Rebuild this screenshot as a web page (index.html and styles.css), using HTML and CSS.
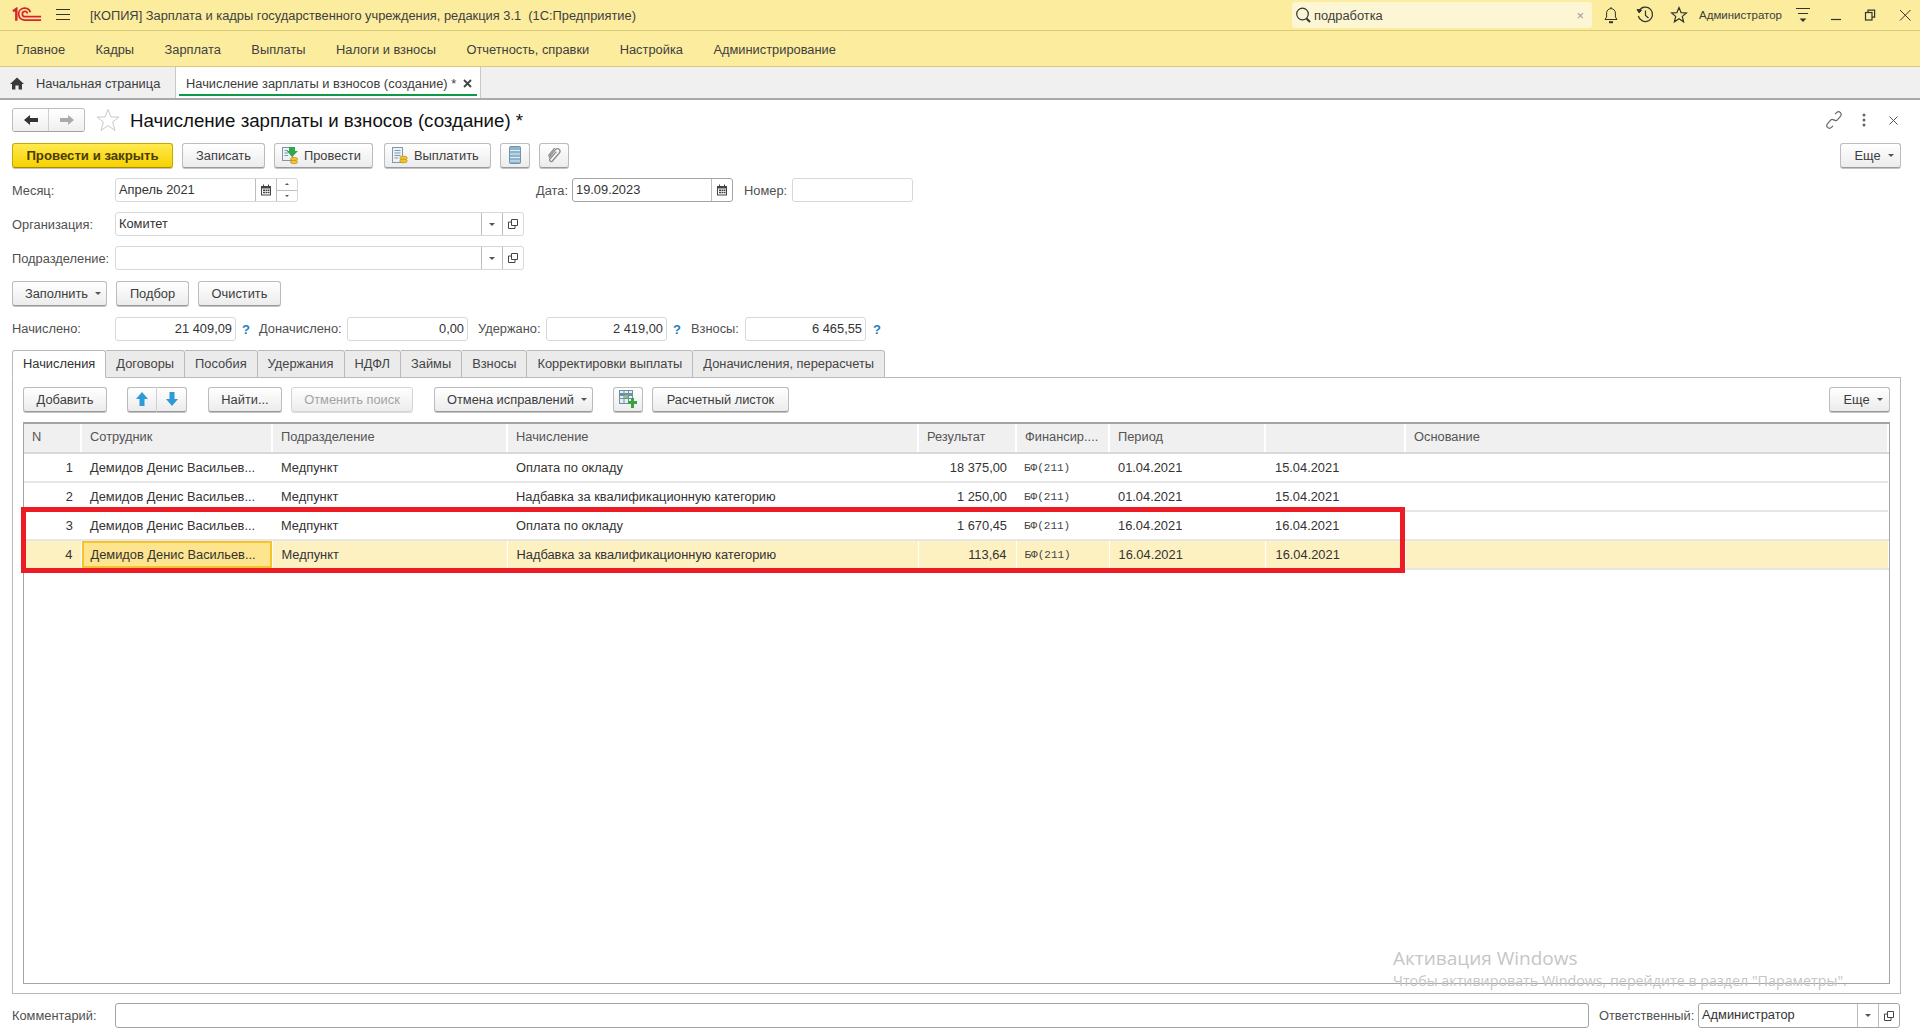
FILE: index.html
```html
<!DOCTYPE html>
<html lang="ru">
<head>
  <meta charset="UTF-8">
  <title>Начисление зарплаты и взносов (создание)</title>
  <link rel="stylesheet" href="styles.css">
</head>
<body>
  <header class="topbar">
    <svg class="logo" width="30" height="16" viewBox="0 0 32 16" fill="none" stroke="#d8232a">
      <path d="M1 4 L4.6 1.6 V14" stroke-width="2.6"/>
      <path d="M19.6 5 A6.4 6.4 0 1 0 14 13.4 H31" stroke-width="1.9"/>
      <path d="M16.6 6.4 A2.8 2.8 0 1 0 14 9.8 H31" stroke-width="1.9"/>
    </svg>
    <svg class="burger" width="16" height="12" viewBox="0 0 16 12" stroke="#333"><path d="M1 .5H15M1 5.5H15M1 10.5H15"/></svg>
    <div class="app-title">[КОПИЯ] Зарплата и кадры государственного учреждения, редакция 3.1&nbsp; (1С:Предприятие)</div>
    <div class="search">
      <svg width="16" height="18" viewBox="0 0 16 18" fill="none" stroke="#333"><circle cx="7.5" cy="8" r="5.8" stroke-width="1.2"/><path d="M11.5 12.5L15 16" stroke-width="2"/></svg>
      <span class="search-text">подработка</span>
      <span class="search-clear">×</span>
    </div>
    <svg class="top-icon" width="18" height="20" viewBox="0 0 18 20" fill="none" stroke="#333"><path d="M3 14.5H15L13.4 12V8A4.4 4.4 0 0 0 4.6 8V12Z"/><path d="M7 17.2H11" stroke-width="2"/><path d="M9 2V3.5"/></svg>
    <svg class="top-icon" width="18" height="20" viewBox="0 0 18 20" fill="none" stroke="#333"><path d="M3.2 5.5A7.2 7.2 0 1 1 2.3 11" stroke-width="1.2"/><path d="M1 4.5L3.2 8L5.6 5Z" fill="#333"/><path d="M9.5 5.5V10.5L12.5 13" stroke-width="1.2"/></svg>
    <svg class="top-icon" width="18" height="20" viewBox="0 0 18 20" fill="none" stroke="#333" stroke-width="1.2"><path d="M9 2.5L11.1 7.6L16.4 8L12.3 11.4L13.6 16.8L9 13.8L4.4 16.8L5.7 11.4L1.6 8L6.9 7.6Z"/></svg>
    <span class="user-name">Администратор</span>
    <svg class="user-menu" width="16" height="16" viewBox="0 0 16 16" stroke="#333"><path d="M1 1.5H15M3 6.5H13"/><path d="M4.6 11.5H11.4L8 15Z" fill="#333" stroke="none"/></svg>
    <svg class="win-btn win-min" width="12" height="12" viewBox="0 0 12 12" stroke="#333"><path d="M1 10.5H11" stroke-width="1.2"/></svg>
    <svg class="win-btn" width="12" height="12" viewBox="0 0 12 12" fill="none" stroke="#333" stroke-width="1.2"><rect x="1.5" y="3.5" width="6.5" height="7.5"/><path d="M4 3.5V1.2H10.6V8.2H8"/></svg>
    <svg class="win-btn" width="14" height="14" viewBox="0 0 14 14" stroke="#333"><path d="M2 2L12.5 12.5M12.5 2L2 12.5"/></svg>
  </header>

  <nav class="menubar">
    <a href="#">Главное</a>
    <a href="#">Кадры</a>
    <a href="#">Зарплата</a>
    <a href="#">Выплаты</a>
    <a href="#">Налоги и взносы</a>
    <a href="#">Отчетность, справки</a>
    <a href="#">Настройка</a>
    <a href="#">Администрирование</a>
  </nav>

  <div class="tabbar">
    <div class="page-tab home-tab">
      <svg width="14" height="13" viewBox="0 0 14 13" fill="#3a3a3a"><path d="M7 .5L14 7H12V12.5H8.6V8.6H5.4V12.5H2V7H0Z"/></svg>
      <span>Начальная страница</span>
    </div>
    <div class="page-tab doc-tab">
      <span>Начисление зарплаты и взносов (создание) *</span>
      <svg width="9" height="9" viewBox="0 0 9 9" stroke="#444" stroke-width="1.8"><path d="M1 1L8 8M8 1L1 8"/></svg>
    </div>
  </div>

  <main class="form">
    <div class="form-head">
      <div class="nav-group">
        <button class="nav-btn"><svg width="14" height="10" viewBox="0 0 14 10" fill="#333"><path d="M0 5L6 0V3H14V7H6V10Z"/></svg></button>
        <button class="nav-btn"><svg width="14" height="10" viewBox="0 0 14 10" fill="#aaa"><path d="M14 5L8 0V3H0V7H8V10Z"/></svg></button>
      </div>
      <svg class="fav-star" width="24" height="24" viewBox="0 0 24 24" fill="#fff" stroke="#c9c9c9"><path d="M12 1.5L15 9H23L16.6 14L19 22.5L12 17.5L5 22.5L7.4 14L1 9H9Z"/></svg>
      <h1 class="form-title">Начисление зарплаты и взносов (создание) *</h1>
      <div class="head-tools">
        <svg width="16" height="18" viewBox="0 0 16 18" fill="none" stroke="#666" stroke-width="1.2"><path d="M9 3.2L10.6 1.6A2.6 2.6 0 0 1 14.4 5.4L11.6 8.6A2.6 2.6 0 0 1 8 8.8"/><path d="M7 14.8L5.4 16.4A2.6 2.6 0 0 1 1.6 12.6L4.4 9.4A2.6 2.6 0 0 1 8 9.2"/></svg>
        <svg width="4" height="14" viewBox="0 0 4 14" fill="#666"><circle cx="2" cy="2" r="1.5"/><circle cx="2" cy="7" r="1.5"/><circle cx="2" cy="12" r="1.5"/></svg>
        <svg class="head-close" width="9" height="9" viewBox="0 0 9 9" stroke="#555"><path d="M.5 .5L8.5 8.5M8.5 .5L.5 8.5"/></svg>
      </div>
    </div>

    <div class="toolbar">
      <button class="btn btn-primary w-161">Провести и закрыть</button>
      <button class="btn w-83">Записать</button>
      <button class="btn w-99 btn-icon">
        <svg width="18" height="19" viewBox="0 0 18 19"><rect x="1.5" y="1.5" width="10" height="13" fill="#eef2f6" stroke="#7f97ad"/><path d="M3.5 4.5H7M3.5 7H7M3.5 9.5H7" stroke="#7f97ad"/><path d="M8 1H14V5H17L11 11L5.8 5H8Z" fill="#33a650"/><ellipse cx="13" cy="13" rx="3.6" ry="1.8" fill="#f2c230" stroke="#b58a10" stroke-width=".6"/><ellipse cx="13" cy="16" rx="3.6" ry="1.8" fill="#f2c230" stroke="#b58a10" stroke-width=".6"/></svg>
        Провести
      </button>
      <button class="btn w-107 btn-icon btn-pay">
        <svg width="18" height="19" viewBox="0 0 18 19"><rect x="1.5" y="1.5" width="10" height="15" fill="#eef2f6" stroke="#7f97ad"/><path d="M3.5 4.5H9.5M3.5 7H9.5M3.5 9.5H9.5M3.5 12H7" stroke="#7f97ad"/><ellipse cx="12.5" cy="12" rx="3.8" ry="1.9" fill="#f2c230" stroke="#b58a10" stroke-width=".6"/><ellipse cx="12.5" cy="15" rx="3.8" ry="1.9" fill="#f2c230" stroke="#b58a10" stroke-width=".6"/></svg>
        Выплатить
      </button>
      <button class="btn w-30">
        <svg width="12" height="18" viewBox="0 0 12 18"><rect x=".5" y=".5" width="11" height="17" rx="1" fill="#8eb3cd" stroke="#6d93ae"/><path d="M1 4.5H11M1 8H11M1 11.5H11M1 15H11" stroke="#e2ecf3"/></svg>
      </button>
      <button class="btn w-30">
        <svg width="16" height="18" viewBox="0 0 16 18" fill="none" stroke="#8a8a8a" stroke-width="1.3"><path d="M3 11.5L9.6 3.4A2.6 2.6 0 0 1 13.5 6.8L6.4 15A1.6 1.6 0 0 1 4 12.8L10.4 5.6"/><path d="M2.4 10L8.6 2.2"/></svg>
      </button>
      <button class="btn btn-drop btn-more w-61">Еще <i class="caret"></i></button>
    </div>

    <div class="field-row">
      <label class="lbl lbl-main">Месяц:</label>
      <div class="input w-183">
        <span class="input-value">Апрель 2021</span>
        <span class="input-cell"><svg width="12" height="12" viewBox="0 0 12 12" fill="#444"><path d="M1 2H3V.5H4V2H8V.5H9V2H11V11.5H1ZM2 4.5V10.5H10V4.5Z"/><path d="M3 5.5H5V7H3ZM5.5 5.5H7.5V7H5.5ZM8 5.5H9.5V7H8ZM3 7.8H5V9.3H3ZM5.5 7.8H7.5V9.3H5.5ZM8 7.8H9.5V9.3H8Z"/></svg></span>
        <span class="input-cell spin"><span class="spin-part"><i class="caret caret-up"></i></span><span class="spin-part"><i class="caret"></i></span></span>
      </div>
      <label class="lbl lbl-date">Дата:</label>
      <div class="input input-dark w-161">
        <span class="input-value">19.09.2023</span>
        <span class="input-cell"><svg width="12" height="12" viewBox="0 0 12 12" fill="#444"><path d="M1 2H3V.5H4V2H8V.5H9V2H11V11.5H1ZM2 4.5V10.5H10V4.5Z"/><path d="M3 5.5H5V7H3ZM5.5 5.5H7.5V7H5.5ZM8 5.5H9.5V7H8ZM3 7.8H5V9.3H3ZM5.5 7.8H7.5V9.3H5.5ZM8 7.8H9.5V9.3H8Z"/></svg></span>
      </div>
      <label class="lbl lbl-num">Номер:</label>
      <div class="input w-121"></div>
    </div>

    <div class="field-row">
      <label class="lbl lbl-main">Организация:</label>
      <div class="input w-409">
        <span class="input-value">Комитет</span>
        <span class="input-cell"><i class="caret"></i></span>
        <span class="input-cell"><svg width="12" height="12" viewBox="0 0 12 12" fill="none" stroke="#444"><path d="M4.5 1.5H10.5V7.5H4.5Z"/><path d="M4 4H1.5V10.5H8V8"/></svg></span>
      </div>
    </div>

    <div class="field-row">
      <label class="lbl lbl-main">Подразделение:</label>
      <div class="input w-409">
        <span class="input-value"></span>
        <span class="input-cell"><i class="caret"></i></span>
        <span class="input-cell"><svg width="12" height="12" viewBox="0 0 12 12" fill="none" stroke="#444"><path d="M4.5 1.5H10.5V7.5H4.5Z"/><path d="M4 4H1.5V10.5H8V8"/></svg></span>
      </div>
    </div>

    <div class="fill-row">
      <button class="btn btn-drop w-95">Заполнить <i class="caret"></i></button>
      <button class="btn w-73">Подбор</button>
      <button class="btn w-83">Очистить</button>
    </div>

    <div class="totals-row">
      <label class="lbl lbl-main">Начислено:</label>
      <div class="input amount w-121">21 409,09</div>
      <span class="hint hint-a">?</span>
      <label class="lbl lbl-don">Доначислено:</label>
      <div class="input amount w-121">0,00</div>
      <label class="lbl lbl-ud">Удержано:</label>
      <div class="input amount w-121">2 419,00</div>
      <span class="hint hint-b">?</span>
      <label class="lbl lbl-vz">Взносы:</label>
      <div class="input amount w-121">6 465,55</div>
      <span class="hint hint-c">?</span>
    </div>

    <div class="tabs">
      <div class="tab tab-active">Начисления</div>
      <div class="tab">Договоры</div>
      <div class="tab">Пособия</div>
      <div class="tab">Удержания</div>
      <div class="tab">НДФЛ</div>
      <div class="tab">Займы</div>
      <div class="tab">Взносы</div>
      <div class="tab">Корректировки выплаты</div>
      <div class="tab">Доначисления, перерасчеты</div>
    </div>

    <section class="panel">
      <div class="panel-tools">
        <button class="btn w-84">Добавить</button>
        <div class="btn-pair">
          <button class="btn w-30"><svg width="12" height="14" viewBox="0 0 12 14" fill="#2e9ad6"><path d="M6 0L12 7H8.5V14H3.5V7H0Z"/></svg></button>
          <button class="btn w-30"><svg width="12" height="14" viewBox="0 0 12 14" fill="#2e9ad6"><path d="M6 14L12 7H8.5V0H3.5V7H0Z"/></svg></button>
        </div>
        <button class="btn w-74 gap-21">Найти...</button>
        <button class="btn btn-off w-122">Отменить поиск</button>
        <button class="btn btn-drop w-159 gap-21">Отмена исправлений <i class="caret"></i></button>
        <button class="btn w-30 gap-20">
          <svg width="18" height="18" viewBox="0 0 18 18"><rect x=".5" y=".5" width="13" height="13" fill="#e6eef3" stroke="#6f8fa5"/><path d="M.5 4.5H13.5" stroke="#6f8fa5" stroke-width="3"/><path d="M5 1V13M9.5 1V13M1 8.5H13" stroke="#6f8fa5"/><path d="M5.5 5H9V8H5.5Z" fill="#8ec06c"/><path d="M12 8H15V11H18V14H15V18H12V14H9V11H12Z" fill="#38a33f"/></svg>
        </button>
        <button class="btn w-137">Расчетный листок</button>
        <button class="btn btn-drop btn-more w-61">Еще <i class="caret"></i></button>
      </div>

      <div class="grid-wrap">
        <table class="grid">
          <colgroup>
            <col class="c-n"><col class="c-emp"><col class="c-dep"><col class="c-acc"><col class="c-res"><col class="c-fin"><col class="c-per"><col class="c-end"><col>
          </colgroup>
          <thead>
            <tr><th>N</th><th>Сотрудник</th><th>Подразделение</th><th>Начисление</th><th>Результат</th><th>Финансир....</th><th>Период</th><th></th><th>Основание</th></tr>
          </thead>
          <tbody>
            <tr><td class="num">1</td><td>Демидов Денис Васильев...</td><td>Медпункт</td><td>Оплата по окладу</td><td class="sum">18 375,00</td><td class="fin">БФ(211)</td><td>01.04.2021</td><td class="date-to">15.04.2021</td><td></td></tr>
            <tr><td class="num">2</td><td>Демидов Денис Васильев...</td><td>Медпункт</td><td>Надбавка за квалификационную категорию</td><td class="sum">1 250,00</td><td class="fin">БФ(211)</td><td>01.04.2021</td><td class="date-to">15.04.2021</td><td></td></tr>
            <tr><td class="num">3</td><td>Демидов Денис Васильев...</td><td>Медпункт</td><td>Оплата по окладу</td><td class="sum">1 670,45</td><td class="fin">БФ(211)</td><td>16.04.2021</td><td class="date-to">16.04.2021</td><td></td></tr>
            <tr class="row-current"><td class="num">4</td><td class="cell-current">Демидов Денис Васильев...</td><td>Медпункт</td><td>Надбавка за квалификационную категорию</td><td class="sum">113,64</td><td class="fin">БФ(211)</td><td>16.04.2021</td><td class="date-to">16.04.2021</td><td></td></tr>
          </tbody>
        </table>
        <div class="red-frame"></div>
      </div>
    </section>

    <div class="bottom-row">
      <label class="lbl lbl-main">Комментарий:</label>
      <div class="input input-dark w-1474"></div>
      <label class="lbl lbl-resp">Ответственный:</label>
      <div class="input input-dark w-202">
        <span class="input-value">Администратор</span>
        <span class="input-cell"><i class="caret"></i></span>
        <span class="input-cell"><svg width="12" height="12" viewBox="0 0 12 12" fill="none" stroke="#444"><path d="M4.5 1.5H10.5V7.5H4.5Z"/><path d="M4 4H1.5V10.5H8V8"/></svg></span>
      </div>
    </div>
  </main>

  <div class="activation">
    <div class="activation-title">Активация Windows</div>
    <div class="activation-text">Чтобы активировать Windows, перейдите в раздел "Параметры".</div>
  </div>
</body>
</html>
```

FILE: styles.css
```css
* {
  box-sizing: border-box;
}

html, body {
  margin: 0;
  height: 1036px;
  overflow: hidden;
}

body {
  font-family: "Liberation Sans", Arial, sans-serif;
  font-size: 12.85px;
  color: #3c3c3c;
  background-color: #fff;
  position: relative;
}

/* top title bar */
.topbar {
  height: 31px;
  background-color: #fbec9e;
  border-bottom: 1px solid #d9c97a;
  display: flex;
  align-items: center;
  padding-right: 8px;
}

.logo {
  margin-left: 12px;
}

.burger {
  margin-left: 13px;
}

.app-title {
  margin-left: 19px;
  flex: 1;
  color: #3f3f3f;
}

.search {
  width: 300px;
  height: 26px;
  background-color: #fdf6d4;
  border-radius: 3px;
  display: flex;
  align-items: center;
  padding: 0 8px 0 3px;
  margin-right: 10px;
}

.search-text {
  flex: 1;
  margin-left: 3px;
}

.search-clear {
  color: #999;
  font-size: 13px;
}

.top-icon {
  margin-left: 16px;
}

.search + .top-icon {
  margin-left: 0;
}

.user-name {
  font-size: 11.5px;
  margin-left: 11px;
  width: 83px;
}

.user-menu {
  margin-left: 13px;
}

.win-btn {
  margin-left: 22px;
}

.win-min {
  margin-left: 19px;
}

/* section menu */
.menubar {
  height: 36px;
  background-color: #fbec9e;
  border-bottom: 1px solid #d9c97a;
  display: flex;
  align-items: center;
  padding: 1px 0 0 16px;
  gap: 30.5px;
}

.menubar a {
  color: #3f3f3f;
  text-decoration: none;
}

/* open pages */
.tabbar {
  height: 33px;
  background-color: #f0f0f0;
  border-bottom: 2px solid #a9a9a9;
  display: flex;
}

.page-tab {
  height: 31px;
  display: flex;
  align-items: center;
  border-right: 1px solid #c9c9c9;
  padding-top: 1px;
}

.home-tab {
  width: 176px;
  padding-left: 10px;
  gap: 12px;
}

.doc-tab {
  width: 305px;
  background-color: #fff;
  padding: 1px 8px 0 10px;
  justify-content: space-between;
  position: relative;
}

.doc-tab::after {
  content: "";
  position: absolute;
  left: 3px;
  right: 3px;
  bottom: 2px;
  height: 2px;
  background-color: #0b9a4a;
}

/* form */
.form {
  padding: 8px 19px 0 12px;
}

.form-head {
  display: flex;
  align-items: center;
  height: 24px;
}

.nav-group {
  display: flex;
  width: 73px;
  height: 24px;
  border: 1px solid #bdbdbd;
  border-bottom-color: #a0a0a0;
  border-radius: 3px;
  overflow: hidden;
}

.nav-btn {
  flex: 1;
  border: 0;
  padding: 0;
  background: linear-gradient(#fff, #efefef);
  display: flex;
  align-items: center;
  justify-content: center;
}

.nav-btn + .nav-btn {
  border-left: 1px solid #cfcfcf;
}

.fav-star {
  margin-left: 11px;
}

.form-title {
  margin: 1px 0 0 10px;
  font-size: 18.7px;
  font-weight: normal;
  color: #111;
  flex: 1;
}

.head-tools {
  display: flex;
  align-items: center;
  gap: 20px;
  margin-right: 3px;
}

.head-close {
  margin-left: 3px;
}

.toolbar {
  display: flex;
  align-items: center;
  gap: 9px;
  height: 26px;
  margin-top: 10px;
}

.btn {
  height: 25px;
  padding: 0;
  font-family: inherit;
  font-size: 12.85px;
  color: #3c3c3c;
  background: linear-gradient(#fff, #ececec);
  border: 1px solid #bcbcbc;
  border-bottom-color: #9a9a9a;
  border-radius: 3px;
  box-shadow: 0 1px 0 #c4c4c4;
  display: inline-flex;
  align-items: center;
  justify-content: center;
  gap: 7px;
}

.btn-primary {
  background: linear-gradient(#ffe94f, #f6d200);
  border-color: #c7a800;
  border-bottom-color: #a68c00;
  color: #4a3c00;
  font-weight: bold;
  font-size: 13.2px;
}

.btn-off {
  color: #a3a3a3;
  border-color: #d4d4d4;
  box-shadow: 0 1px 0 #dcdcdc;
}

.btn-more {
  margin-left: auto;
}

.btn-icon {
  justify-content: flex-start;
  padding-left: 6px;
  gap: 5px;
}

.btn-pay {
  margin-left: 2px;
}

.btn-drop {
  padding-left: 7px;
}

.caret {
  display: inline-block;
  width: 0;
  height: 0;
  border-left: 3px solid transparent;
  border-right: 3px solid transparent;
  border-top: 3px solid #555;
}

.caret-up {
  border-top: 0;
  border-bottom: 3px solid #555;
}

.w-30 { width: 30px; }
.w-61 { width: 61px; }
.w-73 { width: 73px; }
.w-74 { width: 74px; }
.w-83 { width: 83px; }
.w-84 { width: 84px; }
.w-95 { width: 95px; }
.w-99 { width: 99px; }
.w-107 { width: 107px; }
.w-121 { width: 121px; }
.w-122 { width: 122px; }
.w-137 { width: 137px; }
.w-159 { width: 159px; }
.w-161 { width: 161px; }
.w-183 { width: 183px; }
.w-202 { width: 202px; }
.w-409 { width: 409px; }
.w-1474 { width: 1474px; }

.field-row, .totals-row, .bottom-row {
  display: flex;
  align-items: center;
  height: 24px;
  margin-top: 10px;
}

.lbl {
  color: #505050;
  white-space: nowrap;
}

.lbl-main { width: 103px; }
.lbl-date { margin-left: 233px; width: 37px; text-align: right; margin-right: 4px; }
.lbl-num { margin-left: 11px; width: 48px; }
.lbl-don { margin-left: 8px; width: 88px; }
.lbl-ud { margin-left: 10px; width: 68px; }
.lbl-vz { margin-left: 8px; width: 54px; }
.lbl-resp { margin-left: 10px; width: 99px; }

.input {
  height: 24px;
  background-color: #fff;
  border: 1px solid #d8d8d8;
  border-radius: 3px;
  display: flex;
  align-items: stretch;
}

.input-dark {
  border-color: #a4a4a4;
}

.input-value {
  flex: 1;
  padding-left: 3px;
  line-height: 22px;
  color: #333;
}

.input-cell {
  width: 21px;
  border-left: 1px solid #bdbdbd;
  display: flex;
  align-items: center;
  justify-content: center;
}

.spin {
  flex-direction: column;
}

.spin-part {
  flex: 1;
  width: 100%;
  display: flex;
  align-items: center;
  justify-content: center;
}

.spin-part + .spin-part {
  border-top: 1px solid #bdbdbd;
}

.spin .caret {
  border-left-width: 2px;
  border-right-width: 2px;
  border-top-width: 2px;
}

.spin .caret-up {
  border-top-width: 0;
  border-bottom-width: 2px;
}

.amount {
  justify-content: flex-end;
  align-items: center;
  padding: 0 3px 1px 0;
  color: #333;
}

.hint {
  color: #1d7fc0;
  font-weight: bold;
  font-size: 13px;
}

.hint-a { margin-left: 6px; width: 9px; }
.hint-b { margin-left: 6px; width: 10px; }
.hint-c { margin-left: 7px; }

.fill-row {
  display: flex;
  gap: 9px;
  height: 26px;
  margin-top: 11px;
}

.totals-row {
  margin-top: 10px;
}

.totals-row .lbl {
  padding-bottom: 1px;
}

/* tabs */
.tabs {
  display: flex;
  height: 28px;
  margin-top: 9px;
  margin-bottom: -1px;
  position: relative;
}

.tab {
  height: 28px;
  padding: 0 10px 2px;
  display: flex;
  align-items: center;
  background-color: #ebebeb;
  border: 1px solid #b9b9b9;
  border-left: 0;
  border-radius: 0 3px 0 0;
  color: #444;
}

.tab-active {
  background-color: #fff;
  border-left: 1px solid #b9b9b9;
  border-bottom-color: #fff;
  border-radius: 3px 3px 0 0;
  color: #333;
}

.panel {
  height: 617px;
  border: 1px solid #b9b9b9;
  padding: 8px 10px 10px 10px;
}

.panel-tools {
  display: flex;
  align-items: center;
  height: 26px;
  gap: 9px;
}

.panel-tools > .btn-pair {
  margin-left: 11px;
}

.btn-pair {
  display: flex;
}

.btn-pair .btn {
  border-radius: 0 3px 3px 0;
  border-left: 0;
}

.btn-pair .btn:first-child {
  border-left: 1px solid #bcbcbc;
  border-right: 1px solid #cfcfcf;
  border-radius: 3px 0 0 3px;
}

.gap-21 { margin-left: 12px; }
.gap-20 { margin-left: 11px; }

.grid-wrap {
  position: relative;
  height: 562px;
  margin-top: 10px;
  border: 1px solid #a4a4a4;
  border-top-width: 2px;
}

.grid {
  width: 100%;
  border-collapse: collapse;
  table-layout: fixed;
}

.c-n { width: 57px; }
.c-emp { width: 191px; }
.c-dep { width: 235px; }
.c-acc { width: 411px; }
.c-res { width: 98px; }
.c-fin { width: 93px; }
.c-per { width: 156px; }
.c-end { width: 140px; }

.grid th {
  height: 29px;
  padding: 0 0 4px 8px;
  text-align: left;
  font-weight: normal;
  color: #555;
  background-color: #f0f0f0;
  border-right: 2px solid #fff;
  border-bottom: 2px solid #d8d8d8;
}

.grid td {
  height: 29px;
  padding: 0 0 0 9px;
  white-space: nowrap;
  overflow: hidden;
  color: #333;
  border-bottom: 2px solid #e6e6e6;
}

.grid td.num {
  text-align: right;
  padding: 0 8px 0 0;
}

.grid td.sum {
  text-align: right;
  padding: 0 9px 0 0;
}

.grid td.fin {
  font-family: "Liberation Mono", monospace;
  font-size: 11px;
  color: #444;
  padding-left: 8px;
}

.grid td.date-to {
  padding-left: 10px;
}

.row-current td {
  background-color: #fdf1c2;
  border-right: 1px solid #fff;
}

.grid td.cell-current {
  background-color: #fde48e;
  box-shadow: inset 0 0 0 2px #f6c32c;
}

.red-frame {
  position: absolute;
  left: -3px;
  top: 83px;
  width: 1384px;
  height: 66px;
  border: 5px solid #ed1c24;
}

.bottom-row {
  height: 25px;
  margin-top: 9px;
}

.bottom-row .input {
  height: 25px;
}

/* windows watermark */
.activation {
  position: absolute;
  left: 1393px;
  top: 945px;
  color: #c6c6c6;
  font-family: "Open Sans", sans-serif;
}

.activation-title {
  font-size: 19px;
  line-height: 26px;
}

.activation-text {
  font-size: 14.27px;
  line-height: 18px;
  margin-top: 1px;
}
```
